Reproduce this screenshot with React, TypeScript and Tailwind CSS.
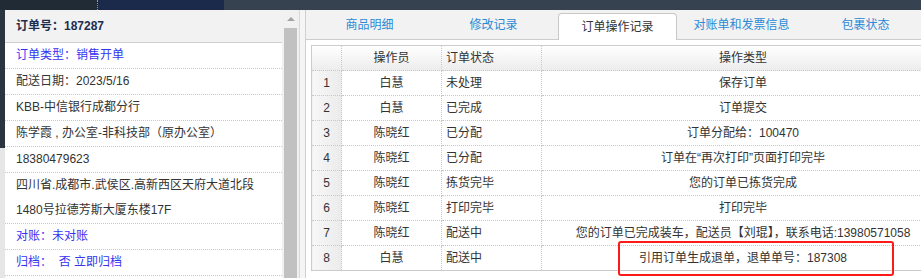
import React from 'react';

const infoRows = [
  { text: '订单类型：销售开单', blue: true },
  { text: '配送日期：2023/5/16' },
  { text: 'KBB-中信银行成都分行' },
  { text: '陈学霞 , 办公室-非科技部（原办公室）' },
  { text: '18380479623' },
  { text: '四川省.成都市.武侯区.高新西区天府大道北段', text2: '1480号拉德芳斯大厦东楼17F' },
  { text: '对账：未对账', blue: true },
  { text: '归档：  否 立即归档', blue: true },
];

const tabs = ['商品明细', '修改记录', '订单操作记录', '对账单和发票信息', '包裹状态'];

const records = [
  ['白慧', '未处理', '保存订单'],
  ['白慧', '已完成', '订单提交'],
  ['陈晓红', '已分配', '订单分配给：100470'],
  ['陈晓红', '已分配', '订单在“再次打印”页面打印完毕'],
  ['陈晓红', '拣货完毕', '您的订单已拣货完成'],
  ['陈晓红', '打印完毕', '打印完毕'],
  ['陈晓红', '配送中', '您的订单已完成装车，配送员【刘琨】，联系电话:13980571058'],
  ['白慧', '配送中', '引用订单生成退单，退单单号：187308'],
];

export default function App() {
  return (
    <div className="relative w-[921px] h-[278px] overflow-hidden bg-[#f0f0f0] text-[12px] text-[#333] font-['Liberation_Sans','Noto_Sans_CJK_SC',sans-serif]">
      {/* top strip */}
      <div className="flex h-[10px]">
        <div className="w-[98px] bg-[#212b35] border-r border-dotted border-[#8a96a3]" />
        <div className="w-[126px] bg-[#1b2a4a]" />
        <div className="flex-1 bg-[#36424f]" />
      </div>

      <div className="flex h-[268px]">
        <div className="w-[5px] flex flex-col">
          <div className="h-[138px] bg-[#2b3540]" />
          <div className="flex-1 bg-[#e6e6e6]" />
        </div>

        {/* order info */}
        <div className="w-[277px] bg-white flex flex-col">
          <div className="h-[33px] shrink-0 bg-[#f2f2f2] border-b border-[#cfcfcf] pl-[11px] flex items-center font-bold text-[#1f2d4d]">
            订单号：187287
          </div>
          {infoRows.map((r, i) => (
            <div
              key={i}
              className={`pl-[11px] border-b border-dotted border-[#c8c8c8] ${r.blue ? 'text-[#3535f0]' : 'text-[#333]'}`}
            >
              <div className="h-[25px] leading-[25px] whitespace-pre">{r.text}</div>
              {r.text2 && <div className="h-[25px] leading-[25px]">{r.text2}</div>}
            </div>
          ))}
        </div>

        {/* scrollbar */}
        <div className="w-[15px] bg-[#f1f1f1] flex flex-col items-center">
          <div className="h-[18px] flex items-center justify-center pl-[2px]">
            <div className="w-0 h-0 border-l-[4px] border-r-[4px] border-b-[4px] border-l-transparent border-r-transparent border-b-[#a3a3a3]" />
          </div>
          <div className="ml-[2px] w-[13px] flex-1 bg-[#c1c1c1]" />
        </div>
        <div className="w-[2px] bg-[#f0f0f0]" />
        <div className="w-px bg-[#d9d9d9]" />
        <div className="w-[5px] bg-[#f5f5f5]" />

        {/* right panel */}
        <div className="flex-1 border-l border-[#d0d0d0] bg-white flex flex-col min-w-0">
          <div className="h-[30px] shrink-0 bg-[#f2f2f2] border-b border-[#cccccc] flex items-end pl-[4px] gap-[5px]">
            {tabs.map((t, i) =>
              i === 2 ? (
                <div
                  key={t}
                  className="w-[119px] shrink-0 h-[27px] -mb-px bg-white border border-b-0 border-[#c8c8c8] rounded-t-[4px] flex items-center justify-center text-[#333]"
                >
                  {t}
                </div>
              ) : (
                <div key={t} className="w-[119px] shrink-0 h-[29px] flex items-center justify-center text-[#2b8ad6]">
                  {t}
                </div>
              )
            )}
          </div>

          <div className="pt-[5px] pl-[5px]">
            <table className="border-collapse border border-[#cccccc] table-fixed w-[633px]">
              <colgroup>
                <col className="w-[30px]" />
                <col className="w-[100px]" />
                <col className="w-[100px]" />
                <col className="w-[403px]" />
              </colgroup>
              <thead>
                <tr className="h-[25px] bg-gradient-to-b from-white to-[#ececec]">
                  <th className="border border-dotted border-[#c8c8c8] font-normal" />
                  <th className="border border-dotted border-[#c8c8c8] font-normal text-center">操作员</th>
                  <th className="border border-dotted border-[#c8c8c8] font-normal text-left pl-[4px]">订单状态</th>
                  <th className="border border-dotted border-[#c8c8c8] font-normal text-center">操作类型</th>
                </tr>
              </thead>
              <tbody>
                {records.map((r, i) => (
                  <tr key={i} className="h-[25px]">
                    <td className="border border-dotted border-[#c8c8c8] text-center bg-gradient-to-r from-[#f7f7f7] to-[#ebebeb]">{i + 1}</td>
                    <td className="border border-dotted border-[#c8c8c8] text-center">{r[0]}</td>
                    <td className="border border-dotted border-[#c8c8c8] text-left pl-[4px]">{r[1]}</td>
                    <td className="border border-dotted border-[#c8c8c8] text-center whitespace-nowrap">{r[2]}</td>
                  </tr>
                ))}
              </tbody>
            </table>
          </div>
        </div>
      </div>

      {/* highlight annotation */}
      <div className="absolute left-[618px] top-[241px] w-[276px] h-[35px] border-2 border-[#ff1a1a] rounded-[3px]" />
    </div>
  );
}
